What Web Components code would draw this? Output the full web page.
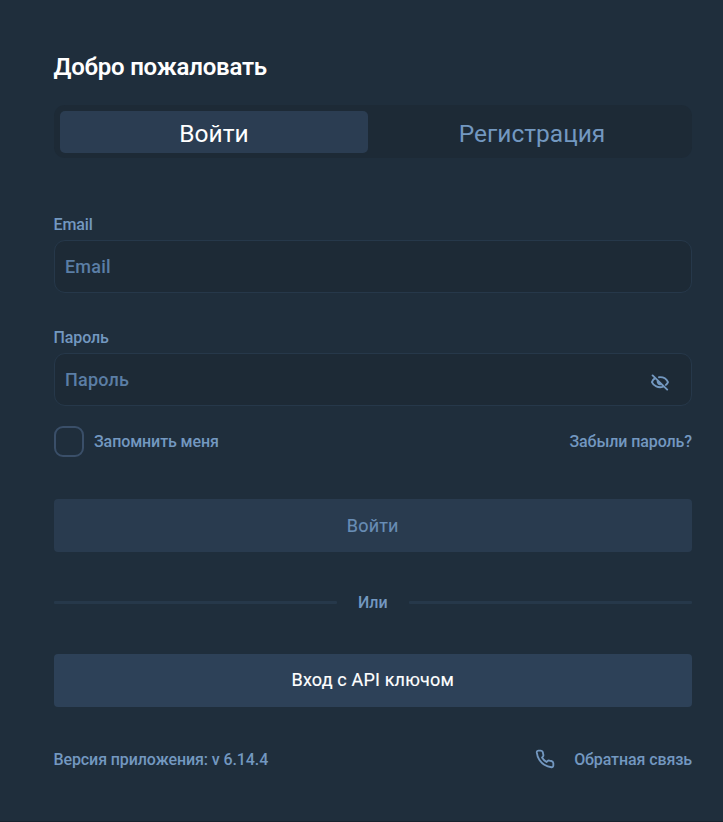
<!DOCTYPE html>
<html lang="ru">
<head>
<meta charset="utf-8">
<title>Добро пожаловать</title>
<style>
html,body{margin:0;height:100%;background:#1f2e3c}
body{font-family:Roboto,"Noto Sans",sans-serif;overflow:hidden}
</style>
</head>
<body>
<login-page></login-page>
<script>
const define = (name, html) => {
  const t = document.createElement('template');
  t.innerHTML = html;
  customElements.define(name, class extends HTMLElement {
    constructor() {
      super();
      this.attachShadow({mode: 'open'}).append(t.content.cloneNode(true));
    }
  });
};

define('tab-item', `<style>
:host{display:flex;flex:1 1 0;align-items:center;justify-content:center;font-size:24.5px;line-height:28px;letter-spacing:0;color:#7398c0;border-radius:5px;padding-top:4px;box-sizing:border-box}
:host([active]){background:#2b3d52;color:#fff}
</style><slot></slot>`);

define('tab-bar', `<style>
:host{display:flex;gap:10px;height:53px;box-sizing:border-box;padding:5.5px 6px 5px 6.5px;background:#1d2a36;border-radius:11px}
</style><slot></slot>`);

define('text-field', `<style>
:host{display:block}
.label{font-size:16px;line-height:20px;font-weight:500;height:25px}
.box{display:flex;align-items:center;justify-content:space-between;height:53px;box-sizing:border-box;border:1.4px solid #26384a;border-radius:11px;background:#1d2a36;padding:0 22px 0 10.5px}
.hint{font-size:18px;line-height:22px;color:#5b7ea5;letter-spacing:.2px;font-weight:500}
::slotted(svg){display:block;margin-top:5px}
</style><div class="label"><slot name="label"></slot></div>
<div class="box"><span class="hint"><slot></slot></span><slot name="icon"></slot></div>`);

define('check-box', `<style>
:host{display:flex;align-items:center;gap:10px}
i{display:block;width:30.5px;height:31px;box-sizing:border-box;border:2px solid #3a4f69;border-radius:9px}
</style><i></i><span><slot></slot></span>`);

define('wide-button', `<style>
:host{display:flex;align-items:center;justify-content:center;height:53px;border-radius:4px;background:#2d4158;color:#fff;font-size:18px;font-weight:400;letter-spacing:.17px;-webkit-text-stroke:.15px;box-sizing:border-box;padding-bottom:1px}
:host([disabled]){background:#293b4f;color:#688db5;letter-spacing:.2px;padding:1px 0 0}
</style><slot></slot>`);

define('or-divider', `<style>
:host{display:flex;align-items:center;gap:21px;height:20px;letter-spacing:0}
:host::before,:host::after{content:"";flex:1;height:3px;border-radius:1px;background:#26384a}
span{padding-top:2px}
</style><span><slot></slot></span>`);

define('login-page', `<style>
:host{display:block;height:822px;box-sizing:border-box;padding:53px 31px 0 53.5px;background:#1f2e3c;border-bottom:1px solid #18232f;color:#7398c0;font-size:16px;line-height:20px;font-weight:500;letter-spacing:-.1px}
h1{margin:0 0 24px;font-size:24px;line-height:28px;font-weight:600;letter-spacing:-.22px;color:#fff}
tab-bar{font-weight:400}
.row{display:flex;align-items:center;justify-content:space-between}
.email{margin-top:57px}
.password{margin-top:35px}
.options{margin-top:20px}
.submit{margin-top:42px}
or-divider{margin-top:40px}
.api{margin-top:42px}
.foot{margin-top:42px}
.support{display:flex;align-items:center;gap:19px}
.support svg{margin-bottom:1px}
svg{display:block;fill:none;stroke:currentColor;stroke-linecap:round;stroke-linejoin:round}
</style>
<h1>Добро пожаловать</h1>
<tab-bar><tab-item active>Войти</tab-item><tab-item>Регистрация</tab-item></tab-bar>
<text-field class="email"><span slot="label">Email</span>Email</text-field>
<text-field class="password"><span slot="label">Пароль</span>Пароль
<svg slot="icon" width="18" height="17" viewBox="0 0 18 17" stroke-width="1.9"><path d="M1.6 1.4 16.2 15.6M8 3.2c4.2-.4 7.4 1.7 9 4.9-.5 1.1-1.2 2-2.1 2.8M4.1 4.1C2.6 5.1 1.5 6.4.9 8.1c1.6 3.7 6.3 6.3 11.3 4.6"/><path d="M6 5.9l5 5c-2.8 1.4-6.3-1.7-5-5z" fill="currentColor" stroke="none"/></svg>
</text-field>
<div class="row options"><check-box>Запомнить меня</check-box><span>Забыли пароль?</span></div>
<wide-button class="submit" disabled>Войти</wide-button>
<or-divider>Или</or-divider>
<wide-button class="api">Вход с API ключом</wide-button>
<div class="row foot"><span>Версия приложения: v 6.14.4</span><span class="support">
<svg width="20" height="20" viewBox="0 0 24 24" stroke-width="2.2"><path d="M22 16.92v3a2 2 0 0 1-2.18 2 19.79 19.79 0 0 1-8.63-3.07 19.5 19.5 0 0 1-6-6A19.79 19.79 0 0 1 2.12 4.11 2 2 0 0 1 4.11 2h2.4a3 3 0 0 1 3 2.4c.1.9.2 1.6.5 2.4a2.4 2.4 0 0 1-.6 2.3L8.4 10.2a15 15 0 0 0 5.4 5.4l1.1-1.1a2.4 2.4 0 0 1 2.3-.6c.8.3 1.5.4 2.4.5A3 3 0 0 1 22 16.92z"/></svg>
Обратная связь</span></div>`);
</script>
</body>
</html>
